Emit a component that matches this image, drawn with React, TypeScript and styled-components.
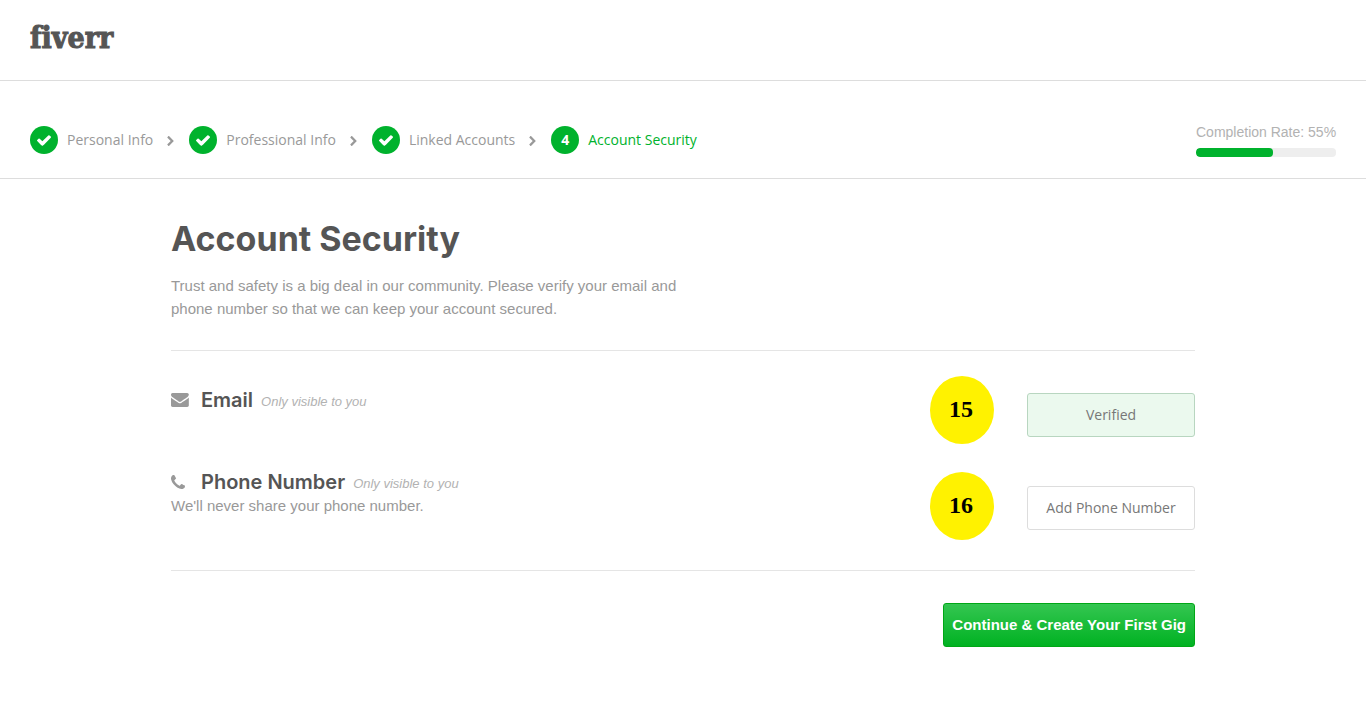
import React from "react";
import styled, { createGlobalStyle } from "styled-components";

const GlobalStyle = createGlobalStyle`
  * { box-sizing: border-box; }
  body {
    margin: 0;
    background: #fff;
    color: #999;
    font-family: "Liberation Sans", Arial, sans-serif;
    font-size: 15px;
  }
  h1, h2, p, ol { margin: 0; padding: 0; }
`;

const green = "#00b22d";

const Header = styled.header`
  display: flex;
  align-items: center;
  height: 81px;
  padding: 0 30px 4px;
  border-bottom: 1px solid #ddd;
`;

const Logo = styled.a`
  color: #555;
  font: bold 30px/40px "DejaVu Serif Condensed", "DejaVu Serif", serif;
  font-variant-ligatures: none;
  -webkit-text-stroke: 1px #555;
  text-decoration: none;
`;

const ProgressBar = styled.nav`
  display: flex;
  justify-content: space-between;
  align-items: flex-start;
  height: 98px;
  padding: 40px 30px 0;
  border-bottom: 1px solid #ddd;
`;

const Steps = styled.ol`
  display: flex;
  gap: 15px;
  padding-top: 5px;
  list-style: none;
`;

const Step = styled.li<{ $active?: boolean }>`
  display: flex;
  align-items: center;
  color: ${(p) => (p.$active ? green : "#999")};
  font: 14px/28px "Open Sans", "Noto Sans", sans-serif;
  white-space: nowrap;
`;

const StepBadge = styled.span`
  display: flex;
  align-items: center;
  justify-content: center;
  width: 28px;
  height: 28px;
  margin-right: 9px;
  border-radius: 50%;
  background: ${green};
  color: #fff;
  font: bold 14px/28px "Open Sans", sans-serif;
`;

const StepArrow = styled.svg`
  width: 7px;
  height: 10px;
  margin: 1px 0 0 14px;
  fill: #999;
`;

const Completion = styled.div`
  display: flex;
  flex-direction: column;
  width: 140px;
  color: #b2b2b2;
  font-size: 14px;
  line-height: 22px;
  white-space: nowrap;
`;

const Track = styled.div`
  height: 9px;
  margin-top: 5px;
  border-radius: 4px;
  background: #eee;
  overflow: hidden;
`;

const Fill = styled.div`
  height: 100%;
  border-radius: 4px;
  background: ${green};
`;

const Main = styled.main`
  max-width: 1024px;
  margin: 0 auto;
  padding: 36px 0;
`;

const Title = styled.h1`
  color: #555;
  font: 700 34px/48px Inter, sans-serif;
`;

const Intro = styled.p`
  max-width: 520px;
  padding: 11px 0 30px;
  line-height: 23px;
`;

const Items = styled.section`
  display: grid;
  gap: 28px;
  padding: 25px 0 30px;
  border: solid #e5e5e5;
  border-width: 1px 0;
`;

const Item = styled.div`
  display: grid;
  grid-template-columns: 1fr 64px 168px;
  column-gap: 33px;
`;

const Info = styled.div<{ $top: number }>`
  padding-top: ${(p) => p.$top}px;
`;

const ItemHeading = styled.div`
  display: flex;
  align-items: center;
`;

const ItemIcon = styled.svg`
  height: 14px;
  fill: #999;
`;

const IconSlot = styled.span`
  display: flex;
  width: 30px;
`;

const ItemTitle = styled.h2`
  color: #555;
  font: 600 20px/20px Inter, sans-serif;
`;

const Note = styled.em`
  padding: 3px 0 0 8px;
  color: #b2b2b2;
  font-size: 13px;
  line-height: 17px;
`;

const Detail = styled.p`
  padding-top: 2px;
  line-height: 24px;
`;

const Marker = styled.strong`
  display: flex;
  align-items: center;
  justify-content: center;
  height: 68px;
  padding: 0 2px 3px 0;
  border-radius: 50%;
  background: #fff200;
  color: #000;
  font: bold 24px/28px "Liberation Serif", "Times New Roman", serif;
`;

const Action = styled.button<{ $verified?: boolean; $top: number }>`
  height: 44px;
  margin-top: ${(p) => p.$top}px;
  padding: 0;
  border: 1px solid ${(p) => (p.$verified ? "#b8d6c0" : "#ddd")};
  border-radius: 3px;
  background: ${(p) => (p.$verified ? "#ebf9ee" : "#fff")};
  color: #777;
  font: 14px/24px "Open Sans", "Noto Sans", sans-serif;
  cursor: pointer;
`;

const Footer = styled.footer`
  display: flex;
  justify-content: flex-end;
  padding-top: 32px;
`;

const Continue = styled.button`
  height: 44px;
  padding: 0 8px;
  border: 1px solid #00a716;
  border-radius: 3px;
  background: linear-gradient(#34c651, #00b222);
  color: #fff;
  font: bold 15px/24px "Liberation Sans", Arial, sans-serif;
  white-space: nowrap;
  cursor: pointer;
`;

const Check = () => (
  <svg width="14" height="11" viewBox="121 334 1550 1188" fill="#fff" aria-hidden="true">
    <path d="M1671 566q0 40-28 68l-724 724-136 136q-28 28-68 28t-68-28l-136-136-362-362q-28-28-28-68t28-68l136-136q28-28 68-28t68 28l294 295 656-657q28-28 68-28t68 28l136 136q28 28 28 68z" />
  </svg>
);

const Chevron = () => (
  <StepArrow viewBox="346 26 1036 1612" aria-hidden="true">
    <path d="M1363 877l-742 742q-19 19-45 19t-45-19l-166-166q-19-19-19-45t19-45l531-531-531-531q-19-19-19-45t19-45l166-166q19-19 45-19t45 19l742 742q19 19 19 45t-19 45z" />
  </StepArrow>
);

const Envelope = () => (
  <ItemIcon viewBox="0 256 1792 1408" aria-hidden="true">
    <path d="M1792 710v794q0 66-47 113t-113 47h-1472q-66 0-113-47t-47-113v-794q44 49 101 87 362 246 497 345 57 42 92.5 65.5t94.5 48 110 24.5h2q51 0 110-24.5t94.5-48 92.5-65.5q170-123 498-345 57-39 100-87zm0-294q0 79-49 151t-122 123q-376 261-468 325-10 7-42.5 31t-54 38.5-52 32.5-57.5 27-50 9h-2q-23 0-50-9t-57.5-27-52-32.5-54-38.5-42.5-31q-91-64-262-182.5t-205-142.5q-62-42-117-115.5t-55-136.5q0-78 41.5-130t118.5-52h1472q65 0 112.5 47t47.5 113z" />
  </ItemIcon>
);

const Phone = () => (
  <ItemIcon viewBox="0 0 1408 1408" aria-hidden="true">
    <path d="M1408 1112q0 27-10 70.5t-21 68.5q-21 50-122 106-94 51-186 51-27 0-52.5-3.5t-57.5-12.5-47.5-14.5-55.5-20.5-49-18q-98-35-175-83-128-79-264.5-215.5t-215.5-264.5q-48-77-83-175-3-9-18-49t-20.5-55.5-14.5-47.5-12.5-57.5-3.5-52.5q0-92 51-186 56-101 106-122 25-11 68.5-21t70.5-10q14 0 21 3 18 6 53 76 11 19 30 54t35 63.5 31 53.5q3 4 17.5 25t21.5 35.5 7 28.5q0 20-28.5 50t-62 55-62 53-28.5 46q0 9 5 22.5t8.5 20.5 14 24 11.5 19q76 137 174 235t235 174q2 1 19 11.5t24 14 20.5 8.5 22.5 5q18 0 46-28.5t53-62 55-62 50-28.5q14 0 28.5 7t35.5 21.5 25 17.5q25 15 53.5 31t63.5 35 54 30q70 35 76 53 3 7 3 21z" />
  </ItemIcon>
);

const completed = ["Personal Info", "Professional Info", "Linked Accounts"];
const completionRate = 55;

export default function App() {
  return (
    <>
      <GlobalStyle />
      <Header>
        <Logo href="#">fiverr</Logo>
      </Header>
      <ProgressBar aria-label="Profile setup">
        <Steps>
          {completed.map((name) => (
            <Step key={name}>
              <StepBadge>
                <Check />
              </StepBadge>
              {name}
              <Chevron />
            </Step>
          ))}
          <Step $active aria-current="step">
            <StepBadge>4</StepBadge>
            Account Security
          </Step>
        </Steps>
        <Completion>
          Completion Rate: {completionRate}%
          <Track>
            <Fill style={{ width: `${completionRate}%` }} />
          </Track>
        </Completion>
      </ProgressBar>
      <Main>
        <Title>Account Security</Title>
        <Intro>
          Trust and safety is a big deal in our community. Please verify your email and phone number so that we can
          keep your account secured.
        </Intro>
        <Items>
          <Item>
            <Info $top={14}>
              <ItemHeading>
                <IconSlot>
                  <Envelope />
                </IconSlot>
                <ItemTitle>Email</ItemTitle>
                <Note>Only visible to you</Note>
              </ItemHeading>
            </Info>
            <Marker>15</Marker>
            <Action $verified $top={17}>
              Verified
            </Action>
          </Item>
          <Item>
            <Info $top={0}>
              <ItemHeading>
                <IconSlot>
                  <Phone />
                </IconSlot>
                <ItemTitle>Phone Number</ItemTitle>
                <Note>Only visible to you</Note>
              </ItemHeading>
              <Detail>We'll never share your phone number.</Detail>
            </Info>
            <Marker>16</Marker>
            <Action $top={14}>Add Phone Number</Action>
          </Item>
        </Items>
        <Footer>
          <Continue>Continue &amp; Create Your First Gig</Continue>
        </Footer>
      </Main>
    </>
  );
}
